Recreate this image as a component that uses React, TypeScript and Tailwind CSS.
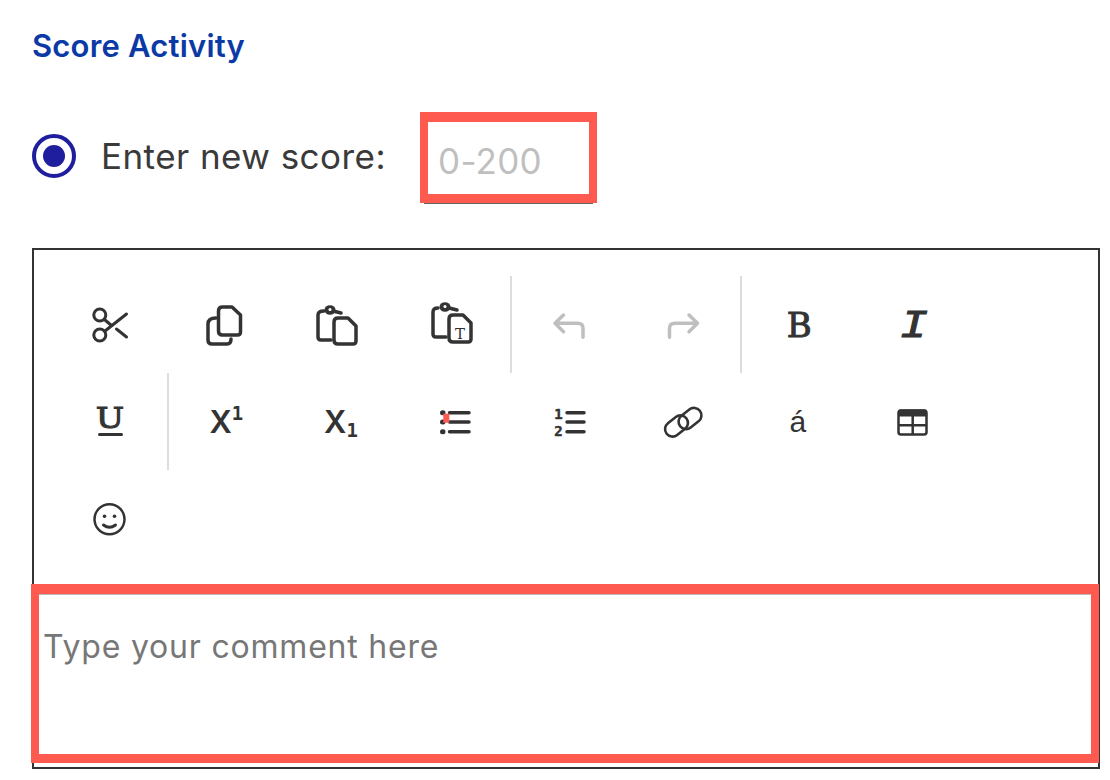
const sep = "relative after:absolute after:top-0 after:bottom-0 after:right-[-1px] after:w-[2px] after:bg-[#dddddd]";
const cell = "flex items-center justify-center text-[#333333]";

const Svg = ({ box, children, color = "#333333", width = "3.5" }: { box: string; children: React.ReactNode; color?: string; width?: string }) => (
    <svg viewBox={box} className="w-12 h-12" fill="none" stroke={color} strokeWidth={width} strokeLinecap="round" strokeLinejoin="round">
        {children}
    </svg>
);

const Knob = ({ cx, cy }: { cx: number; cy: number }) => (
    <>
        <ellipse cx={cx} cy={cy} rx="5.5" ry="4.800" fill="#333333" stroke="none" />
        <circle cx={cx} cy={cy - 0.5} r="1.500" fill="#ffffff" stroke="none" />
    </>
);

const App = () => {
    return (
        <div className="w-[1110px] h-[780px] bg-white overflow-hidden pl-8 pt-[27px] font-['Inter',sans-serif]">
            <h2 className="text-[31px] leading-[38px] tracking-[0.2px] font-semibold text-[#0b3aa6]">Score Activity</h2>

            <div className="flex items-start h-[91px] mt-[47px]">
                <span className="mt-[22px] w-11 h-11 rounded-full border-[4px] border-[#1e1e9e] flex items-center justify-center">
                    <span className="w-[22px] h-[22px] rounded-full bg-[#1e1e9e]" />
                </span>
                <label className="ml-[25px] mt-[22px] text-[35px] leading-[44px] tracking-[0.45px] text-[#3a3a3a]">Enter new score:</label>
                <input
                    placeholder="0-200"
                    className="ml-auto mr-[513px] w-[177px] h-[91px] box-border border-x-[8px] border-t-[10px] border-b-[9px] border-[#ff5a4f] pl-[10px] pt-[5px] text-[35px] tracking-[0.3px] outline-none shadow-[0_5px_0_-4px_#666666] placeholder:text-[#bfbfbf]"
                />
            </div>

            <div className="mt-[45px] w-[1068px] h-[521px] border-2 border-[#333333]">
                <div className="grid grid-cols-[repeat(8,114.6px)] auto-rows-[97px] mt-[26px] ml-[19px]">
                    <div className={cell}>
                        <Svg box="86 300 48 48" width="3">
                            <circle cx="99.800" cy="314" r="6" />
                            <circle cx="99.800" cy="334" r="6" />
                            <path d="M126.500 313 105 330" />
                            <path d="M105 319l6.500 5.500M116.500 328l10 8" />
                        </Svg>
                    </div>
                    <div className={cell}>
                        <Svg box="200 300 48 48">
                            <path d="M221 306h10l8.500 8v17q0 3-3 3h-15q-4 0-4-4v-20q0-4 4-4z" />
                            <path d="M215 317q-8 0-8 6v16q0 4 4 4h15q4 0 4-5" />
                        </Svg>
                    </div>
                    <div className={cell}>
                        <Svg box="315 300 48 48">
                            <path d="M324 310q-6 0-6 4v22q0 3 3 3h10" />
                            <path d="M333 310l8 2" />
                            <Knob cx={330} cy={309} />
                            <path d="M338 317h10l8 8v15q0 3-3 3h-15q-4 0-4-4v-18q0-4 4-4z" />
                        </Svg>
                    </div>
                    <div className={`${cell} ${sep}`}>
                        <Svg box="430 300 48 48">
                            <path d="M438 307q-5 0-5 4v22q0 3 3 3h10" />
                            <path d="M449 307l8 2" />
                            <Knob cx={445} cy={306} />
                            <path d="M453 314h10l8 8v16q0 3-3 3h-15q-4 0-4-4v-19q0-4 4-4z" />
                            <text x="460" y="338" textAnchor="middle" fontSize="15" fontFamily="DejaVu Serif, serif" fill="#333333" stroke="none">T</text>
                        </Svg>
                    </div>
                    <div className={cell}>
                        <Svg box="544 300 48 48" color="#bfbfbf">
                            <path d="M562.500 314 554 322.300l8.500 8.400M554 322.300h22.500q5.500 0 5.500 5v9" />
                        </Svg>
                    </div>
                    <div className={`${cell} ${sep}`}>
                        <Svg box="659 300 48 48" color="#bfbfbf">
                            <path d="M689 314l8.500 8.300-8.500 8.400M697.500 322.300H675q-5.500 0-5.500 5v9" />
                        </Svg>
                    </div>
                    <div className={cell}>
                        <span className="text-[34px] leading-none ml-[3px] font-['DejaVu_Serif',serif] [-webkit-text-stroke:1px_#333333]">B</span>
                    </div>
                    <div className={cell}>
                        <span className="text-[39px] leading-none scale-x-[1.2] ml-[2px] mt-[6px] font-['Liberation_Mono',monospace] italic [-webkit-text-stroke:1px_#333333]">I</span>
                    </div>

                    <div className={`${cell} ${sep} flex-col`}>
                        <span className="text-[28px] leading-[24px] scale-x-[1.2] font-['DejaVu_Serif',serif] [-webkit-text-stroke:1px_#333333]">U</span>
                        <span className="w-[25px] h-[3px] mt-[2px] rounded-full bg-[#333333]" />
                    </div>
                    <div className={`${cell} pl-[3px]`}>
                        <span className="flex items-start h-[31px]">
                            <span className="text-[31px] leading-none font-semibold">X</span>
                            <span className="text-[19px] leading-none font-['DejaVu_Sans_Mono',monospace] font-bold -mt-[2px]">1</span>
                        </span>
                    </div>
                    <div className={`${cell} pl-[3px]`}>
                        <span className="flex items-start h-[31px]">
                            <span className="text-[31px] leading-none font-semibold">X</span>
                            <span className="text-[19px] leading-none font-['DejaVu_Sans_Mono',monospace] font-bold mt-[15px]">1</span>
                        </span>
                    </div>
                    <div className={cell}>
                        <Svg box="430 397 48 48">
                            <path d="M449.500 411.700H469M449.500 421H469M449.500 430.700H469" />
                            <path strokeWidth="5" d="M442.500 411.700h.5M442.500 421h.5M442.500 430.700h.5" />
                            <rect x="443.300" y="412.700" width="6" height="9" fill="#ff5a4f" stroke="none" />
                        </Svg>
                    </div>
                    <div className={cell}>
                        <Svg box="544 397 48 48">
                            <text x="557.500" y="418" textAnchor="middle" fontSize="14" fontWeight="700" fontFamily="DejaVu Sans Mono, monospace" fill="#333333" stroke="#333333" strokeWidth=".5">1</text>
                            <text x="557.500" y="435" textAnchor="middle" fontSize="14" fontWeight="700" fontFamily="DejaVu Sans Mono, monospace" fill="#333333" stroke="#333333" strokeWidth=".5">2</text>
                            <path d="M566 411.700H583M566 421H583M566 430.700H583" />
                        </Svg>
                    </div>
                    <div className={cell}>
                        <Svg box="659 397 48 48" width="2.600">
                            <rect x="664" y="417.500" width="25" height="15" rx="7.500" transform="rotate(-38 676.500 425)" />
                            <rect x="677.500" y="410" width="25" height="15" rx="7.500" transform="rotate(-38 690 417.500)" />
                        </Svg>
                    </div>
                    <div className={cell}>
                        <span className="text-[30px] leading-none font-['Liberation_Sans',sans-serif]">á</span>
                    </div>
                    <div className={cell}>
                        <Svg box="888 397 48 48" width="2.500">
                            <rect x="898.500" y="409.500" width="28" height="24" rx="2.500" />
                            <rect x="898" y="408.500" width="29" height="7" rx="2" fill="#333333" stroke="none" />
                            <path strokeLinecap="butt" d="M912.700 415v18M898.500 424.300h28" />
                        </Svg>
                    </div>

                    <div className={cell}>
                        <Svg box="86 494 48 48" width="2.500">
                            <circle cx="109.500" cy="518.300" r="15" />
                            <circle cx="104.500" cy="515.300" r="1.800" fill="#333333" stroke="none" />
                            <circle cx="114.500" cy="515.300" r="1.800" fill="#333333" stroke="none" />
                            <path strokeWidth="3" d="M103.500 524q6 4.500 12 0" />
                        </Svg>
                    </div>
                </div>

                <div className="mt-[17px] -ml-[3px] w-[1068px] h-[179px] box-border border-x-[8px] border-t-[10px] border-b-[9px] border-[#ff5a4f]">
                    <textarea
                        placeholder="Type your comment here"
                        className="block w-full h-full resize-none border-t border-[#bbbbbb] pl-[4px] pt-[33px] text-[32px] leading-[38px] tracking-[0.8px] outline-none placeholder:text-[#777777]"
                    />
                </div>
            </div>
        </div>
    );
};

export default App;
